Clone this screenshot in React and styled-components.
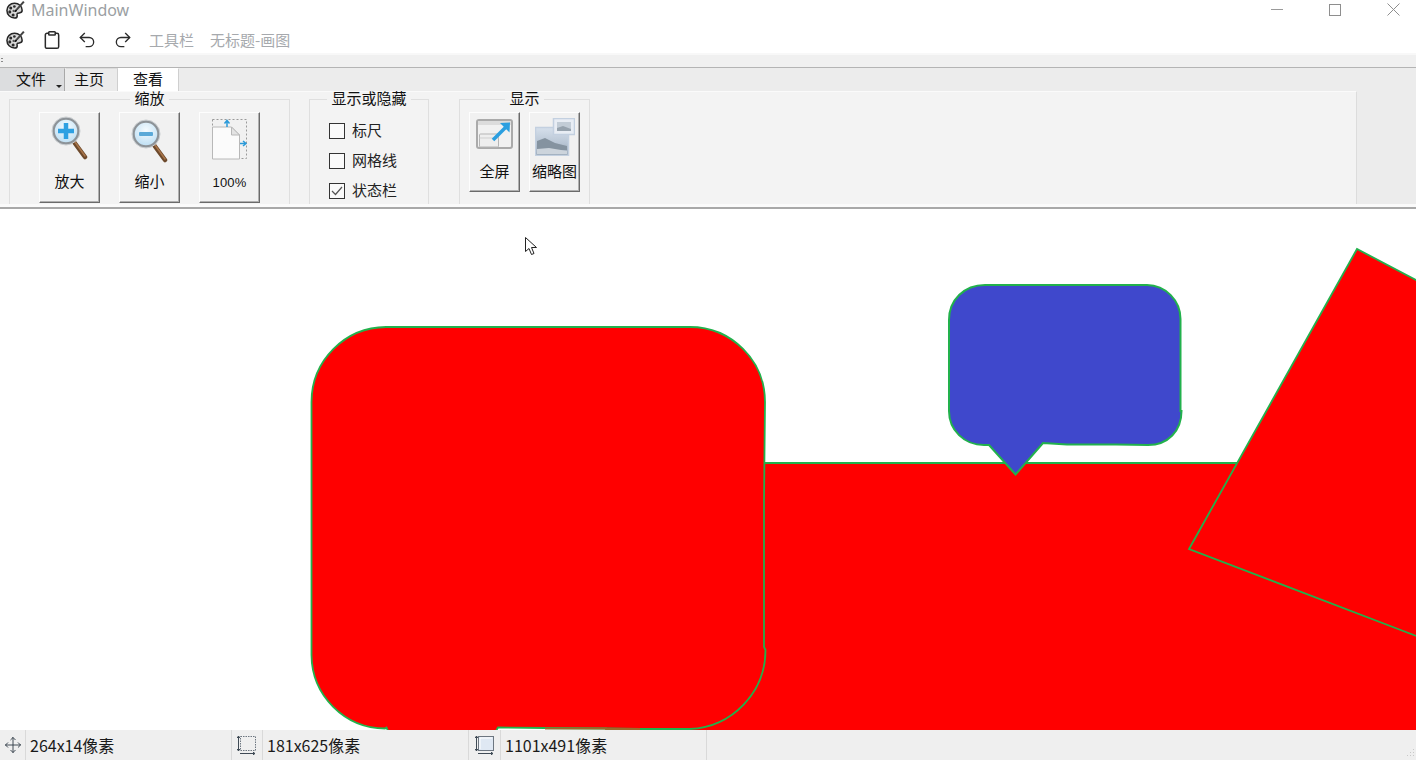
import React from 'react';
import styled, { createGlobalStyle } from 'styled-components';
import { Clipboard, Undo2, Redo2, Move } from 'lucide-react';

const GlobalStyle = createGlobalStyle`
html,body{
  margin:0;
  padding:0;
  overflow:hidden;
  background:#fff;
}
*{box-sizing:border-box;}
body{
  font-family:"Noto Sans CJK SC","Noto Sans",sans-serif;
  font-size:15px;
  color:#111;
}
`;

const Window = styled.div`
width:1416px;
height:760px;
display:flex;
flex-direction:column;
overflow:hidden;
`;

const TitleBar = styled.div`
height:27px;
flex:none;
display:flex;
align-items:center;
padding:0 16px 8px 6px;
background:#fff;
`;
const TitleText = styled.span`
margin-left:6px;
font-family:"Noto Sans","Noto Sans CJK SC",sans-serif;
font-size:16px;
line-height:16px;
color:#9b9fa3;
flex:1;
`;
const WinControls = styled.div`
display:flex;
align-items:center;
gap:46px;
`;

const QuickBar = styled.div`
height:26px;
flex:none;
display:flex;
align-items:center;
padding:0 0 1px 6px;
background:#fff;
`;
const QuickIcon = styled.span`
display:flex;
color:#2b2b2b;
margin-right:${p => p.$gap}px;
`;
const QuickText = styled.span`
font-size:15px;
color:#a6a9ad;
margin-right:${p => p.$gap}px;
`;

const HandleBar = styled.div`
height:15px;
flex:none;
background:#f0f0f0;
border-top:2px solid #f8f8f8;
border-bottom:1px solid #b4b4b4;
padding:3px 0 0 1px;
`;
const Grip = styled.div`
width:2px;
height:6px;
background:repeating-linear-gradient(#8a8a8a 0 1px,transparent 1px 3px);
`;

const TabBar = styled.div`
height:23px;
flex:none;
display:flex;
background:#ececec;
`;
const Tab = styled.div`
width:${p => p.$w}px;
position:relative;
display:flex;
justify-content:center;
align-items:center;
font-size:15px;
line-height:20px;
padding:0 ${p => p.$pr || 0}px 2px 0;
background:${p => p.$active ? '#fff' : p.$file ? '#dcdddf' : '#ebebeb'};
border-top:1px solid ${p => p.$active ? '#fff' : '#dcdcdc'};
border-right:1px solid ${p => p.$file ? '#a8a8a8' : '#cfcfcf'};
margin-right:${p => p.$file ? 1 : 0}px;
`;
const Caret = styled.span`
position:absolute;
left:56px;
top:16px;
width:0;
height:0;
border-left:3.5px solid transparent;
border-right:3.5px solid transparent;
border-top:3.5px solid #222;
`;

const RibbonArea = styled.div`
height:118px;
flex:none;
display:flex;
flex-direction:column;
background:#ececec;
border-bottom:2px solid #a8a8a8;
`;
const Ribbon = styled.div`
width:1357px;
height:113px;
flex:none;
display:flex;
padding-left:9px;
background:#f3f3f3;
border-top:1px solid #fafafa;
border-right:1px solid #dcdcdc;
`;
const RibbonFoot = styled.div`
height:3px;
flex:none;
background:#fafafa;
`;
const Group = styled.fieldset`
width:${p => p.$w}px;
height:113px;
min-width:0;
margin:-1px ${p => p.$gap || 0}px 0 0;
padding:0;
border:1px solid #dfdfdf;
border-bottom:none;
`;
const GroupTitle = styled.legend`
margin:0 auto;
padding:0 4px 2px;
font-size:15px;
line-height:14px;
color:#111;
`;
const GroupBody = styled.div`
display:flex;
padding:5px 0 0 ${p => p.$pad}px;
gap:${p => p.$spacing || 0}px;
`;
const BigButton = styled.div`
width:${p => p.$small ? 51 : 61}px;
height:${p => p.$small ? 80 : 91}px;
display:flex;
flex-direction:column;
align-items:center;
padding:${p => p.$top}px 0 ${p => p.$small ? 10 : 11}px;
background:#f1f1f1;
border-top:1px solid #fdfdfd;
border-left:1px solid #fdfdfd;
border-right:1px solid #6a6a6a;
border-bottom:1px solid #6a6a6a;
box-shadow:inset -1px -1px 0 #b0b0b0;
`;
const ButtonLabel = styled.span`
margin-top:auto;
font-size:15px;
line-height:20px;
white-space:nowrap;
`;
const PercentLabel = styled(ButtonLabel)`
font-family:"Liberation Sans",sans-serif;
font-size:13px;
letter-spacing:.2px;
margin-bottom:-2px;
`;
const CheckList = styled.div`
display:flex;
flex-direction:column;
padding-top:4px;
`;
const CheckRow = styled.label`
height:30px;
display:flex;
align-items:center;
gap:7px;
color:#222;
`;
const CheckText = styled.span`
font-size:15px;
line-height:20px;
padding-bottom:2px;
`;
const CheckBox = styled.span`
width:16px;
height:16px;
display:flex;
align-items:center;
justify-content:center;
background:#fafafa;
border:1px solid #333;
`;

const Canvas = styled.div`
height:521px;
flex:none;
background:#fff;
overflow:hidden;
`;

const StatusBar = styled.div`
height:30px;
flex:none;
position:relative;
display:flex;
background:#efefef;
`;
const StatusIcon = styled.div`
width:${p => p.$w}px;
display:flex;
align-items:center;
justify-content:center;
border-right:1px solid #d9d9d9;
`;
const StatusText = styled.div`
width:${p => p.$w}px;
padding:0 0 1px 4px;
display:flex;
align-items:center;
font-size:16px;
color:#1a1a1a;
border-right:1px solid #d9d9d9;
`;
const SizeGrip = styled.svg`
position:absolute;
right:1px;
bottom:1px;
`;

const PaletteIcon = () => (
  <svg width="19" height="19" viewBox="0 0 20 20">
    <path d="M9 3.500C4.500 3.500 1 6.600 1 11s3.500 8 8 8c2 0 2.800-1 2.800-2.200 0-1.500-1-2 .4-2.800 1.600-.8 4.800.4 4.800-3.200C17 6.500 13.500 3.500 9 3.500z" fill="#d8d8d8" stroke="#262626" strokeWidth="1.600" />
    <circle cx="5" cy="8.500" r="1.600" fill="#2a2a2a" />
    <circle cx="4" cy="12.500" r="1.600" fill="#2a2a2a" />
    <circle cx="7.500" cy="15.800" r="1.600" fill="#2a2a2a" />
    <circle cx="8.800" cy="6.800" r="1.400" fill="#2a2a2a" />
    <circle cx="8" cy="11.500" r="1.200" fill="#555" />
    <path d="M10 11.500l1.200-2.700L18 1l1.600 1.400-6.900 7.500z" fill="#444" />
    <path d="M9 12.500c1 0 2 .2 2.800-1.500l-1.300-1.300C9.500 10.300 9 11 9 12.500z" fill="#111" />
  </svg>
);

const MinIcon = () => (
  <svg width="12" height="12" viewBox="0 0 12 12"><path d="M0 5.500h12" stroke="#9a9a9a" /></svg>
);
const MaxIcon = () => (
  <svg width="12" height="12" viewBox="0 0 12 12"><rect x=".5" y=".5" width="11" height="11" fill="none" stroke="#8e8e8e" /></svg>
);
const CloseIcon = () => (
  <svg width="13" height="13" viewBox="0 0 13 13"><path d="M.5.500l12 12M12.500.500l-12 12" stroke="#8e8e8e" /></svg>
);

const Magnifier = ({ minus }) => (
  <svg width="38" height="44" viewBox="0 0 38 44">
    <defs>
      <radialGradient id={minus ? 'lensB' : 'lensA'} cx=".5" cy=".35" r=".7">
        <stop offset="0" stopColor="#f4fbff" />
        <stop offset="1" stopColor="#b9dcf2" />
      </radialGradient>
    </defs>
    <path d="M23 26l11 15" stroke="#6d4a2c" strokeWidth="4.500" strokeLinecap="round" />
    <path d="M24 26l10 14" stroke="#a9754a" strokeWidth="1.500" strokeLinecap="round" />
    <circle cx="15" cy="15" r="12.500" fill={`url(#${minus ? 'lensB' : 'lensA'})`} stroke="#8d9398" strokeWidth="2.500" />
    <circle cx="15" cy="15" r="14" fill="none" stroke="#c9cdd0" />
    {minus
      ? <rect x="8" y="13" width="14" height="4" rx="1" fill="#5aa9d8" />
      : <path d="M15 7v16M7 15h16" stroke="#2ea0e2" strokeWidth="4.500" />}
  </svg>
);

const ActualSizeIcon = () => (
  <svg width="36" height="41" viewBox="0 0 36 41">
    <rect x=".5" y=".5" width="34" height="39" fill="none" stroke="#9a9a9a" strokeDasharray="2 2" />
    <path d="M.5 8h19l8 8v24H.500z" fill="#fbfbfb" stroke="#b8b8b8" />
    <path d="M19.500 8v8h8z" fill="#e3e3e3" stroke="#b8b8b8" />
    <path d="M15 2v6M12.500 4.500L15 1.500l2.500 3M28 24.500h6M31 22l3 2.500-3 2.500" stroke="#2b9ad9" strokeWidth="1.500" fill="none" />
  </svg>
);

const FullscreenIcon = () => (
  <svg width="37" height="30" viewBox="0 0 37 30">
    <rect x="1" y="1" width="35" height="28" rx="2" fill="#f1f1f1" stroke="#aaa" strokeWidth="2" />
    <path d="M2 2h33v4H2z" fill="#dcdcdc" />
    <rect x="3.500" y="15" width="19" height="13" rx="1" fill="#eee" stroke="#b5b5b5" />
    <path d="M3.500 19h19" stroke="#cfcfcf" />
    <path d="M17 21L30 8" stroke="#2b9fe0" strokeWidth="3.500" />
    <path d="M24 4l10-.5-.5 10z" fill="#2b9fe0" />
  </svg>
);

const ThumbnailIcon = () => (
  <svg width="40" height="38" viewBox="0 0 40 38">
    <defs>
      <linearGradient id="sky" x1="0" y1="0" x2="0" y2="1">
        <stop offset="0" stopColor="#d6e0ec" />
        <stop offset=".55" stopColor="#b9c6d5" />
        <stop offset="1" stopColor="#98a6b5" />
      </linearGradient>
    </defs>
    <rect x=".5" y="9.500" width="33" height="28" fill="url(#sky)" stroke="#c3d0e0" strokeWidth="1.500" />
    <path d="M2 23l8-3 10 5 12 3v4H2z" fill="#8593a0" />
    <path d="M2 31l12-1 18 3v3H2z" fill="#ccd4dc" />
    <rect x="18.500" y=".5" width="21" height="16" fill="#e8edf4" stroke="#c3d0e0" strokeWidth="1.500" />
    <rect x="22" y="4" width="14" height="9" fill="#c2ccd6" />
    <path d="M22 10l6-2 8 3v2H22z" fill="#96a2ad" />
  </svg>
);

const MoveIcon = () => <Move size={18} strokeWidth={1.200} color="#2f3a45" />;

const SelectIcon = () => (
  <svg width="20" height="20" viewBox="0 0 20 20">
    <rect x="3.500" y="1.500" width="15" height="14" fill="none" stroke="#6d7680" strokeDasharray="1.500 1" />
    <path d="M1.500 1v15M.2 3L1.500 1l1.300 2M.2 14l1.300 2 1.300-2M3 18.500h15M16 17.200l2 1.300-2 1.300" stroke="#3f4a55" fill="none" />
  </svg>
);

const CanvasSizeIcon = () => (
  <svg width="20" height="20" viewBox="0 0 20 20">
    <rect x="3.500" y="1.500" width="15" height="14" fill="#dfe8f3" stroke="#6d7680" />
    <path d="M5 14V3h12" stroke="#fff" fill="none" />
    <path d="M1.500 1v15M.2 3L1.500 1l1.300 2M.2 14l1.300 2 1.300-2M3 18.500h15M16 17.200l2 1.300-2 1.300" stroke="#3f4a55" fill="none" />
  </svg>
);

const Drawing = () => (
  <svg width="1416" height="521" viewBox="0 209 1416 521" style={{ display: 'block' }}>
    <rect x="640" y="463" width="800" height="300" fill="#ff0000" />
    <path d="M764 463H1300" fill="none" stroke="#22b14c" strokeWidth="2" />
    <path
      d="M386 327H690A75 75 0 0 1 765 402L764 500V647L765.500 650A79 79 0 0 1 690 729L640 729L606 728.500L545 728L498 727.500L496 731H388L386.500 727.500L385 728.500A74 74 0 0 1 311.500 655V402A75 75 0 0 1 386 327Z"
      fill="#ff0000"
      stroke="#22b14c"
      strokeWidth="1.800"
    />
    <path d="M545 728.500H606V729H640" fill="none" stroke="#9c6a2c" strokeWidth="1.800" />
    <path d="M1357 249L1189 549L1500 668L1500 324Z" fill="#ff0000" stroke="#22b14c" strokeWidth="1.800" />
    <path
      d="M985 285H1147A34 34 0 0 1 1180.500 319V411H1181.500C1181.500 431 1168 445 1148 445L1116 444.500H1067L1043 443L1015.500 474.500L989 445H984C964 445 949 430 949 411V320C949 300 964 285 985 285Z"
      fill="#3f48cc"
      stroke="#22b14c"
      strokeWidth="2"
    />
    <path
      d="M525.500 237.500V251.500L529 248.500L531.500 254.500L534 253.500L531.500 247.500H536.500Z"
      fill="#fff"
      stroke="#222"
      strokeWidth="1"
    />
  </svg>
);

const App = () => {
  return (
    <Window>
      <GlobalStyle />
      <TitleBar>
        <PaletteIcon />
        <TitleText>MainWindow</TitleText>
        <WinControls>
          <MinIcon />
          <MaxIcon />
          <CloseIcon />
        </WinControls>
      </TitleBar>
      <QuickBar>
        <QuickIcon $gap={17}><PaletteIcon /></QuickIcon>
        <QuickIcon $gap={15}><Clipboard size={20} strokeWidth={1.800} /></QuickIcon>
        <QuickIcon $gap={16}><Undo2 size={20} strokeWidth={1.600} /></QuickIcon>
        <QuickIcon $gap={16}><Redo2 size={20} strokeWidth={1.600} /></QuickIcon>
        <QuickText $gap={16}>工具栏</QuickText>
        <QuickText $gap={0}>无标题-画图</QuickText>
      </QuickBar>
      <HandleBar><Grip /></HandleBar>
      <TabBar>
        <Tab $w={65} $file $pr={2}>文件<Caret /></Tab>
        <Tab $w={52} $pr={5}>主页</Tab>
        <Tab $w={61} $active>查看</Tab>
      </TabBar>
      <RibbonArea>
        <Ribbon>
          <Group $w={281} $gap={19}>
            <GroupTitle>缩放</GroupTitle>
            <GroupBody $pad={29} $spacing={19}>
              <BigButton $top={3}>
                <Magnifier />
                <ButtonLabel>放大</ButtonLabel>
              </BigButton>
              <BigButton $top={6}>
                <Magnifier minus />
                <ButtonLabel>缩小</ButtonLabel>
              </BigButton>
              <BigButton $top={6}>
                <ActualSizeIcon />
                <PercentLabel>100%</PercentLabel>
              </BigButton>
            </GroupBody>
          </Group>
          <Group $w={120} $gap={30}>
            <GroupTitle>显示或隐藏</GroupTitle>
            <GroupBody $pad={19}>
              <CheckList>
                <CheckRow><CheckBox /><CheckText>标尺</CheckText></CheckRow>
                <CheckRow><CheckBox /><CheckText>网格线</CheckText></CheckRow>
                <CheckRow>
                  <CheckBox>
                    <svg width="12" height="10" viewBox="0 0 12 10"><path d="M1 5l3.500 3.500L11 1" fill="none" stroke="#555" strokeWidth="1.200" /></svg>
                  </CheckBox>
                  <CheckText>状态栏</CheckText>
                </CheckRow>
              </CheckList>
            </GroupBody>
          </Group>
          <Group $w={131}>
            <GroupTitle>显示</GroupTitle>
            <GroupBody $pad={9} $spacing={9}>
              <BigButton $small $top={6}>
                <FullscreenIcon />
                <ButtonLabel>全屏</ButtonLabel>
              </BigButton>
              <BigButton $small $top={5}>
                <ThumbnailIcon />
                <ButtonLabel>缩略图</ButtonLabel>
              </BigButton>
            </GroupBody>
          </Group>
        </Ribbon>
        <RibbonFoot />
      </RibbonArea>
      <Canvas><Drawing /></Canvas>
      <StatusBar>
        <StatusIcon $w={26}><MoveIcon /></StatusIcon>
        <StatusText $w={206}>264x14像素</StatusText>
        <StatusIcon $w={31}><SelectIcon /></StatusIcon>
        <StatusText $w={206}>181x625像素</StatusText>
        <StatusIcon $w={32}><CanvasSizeIcon /></StatusIcon>
        <StatusText $w={206}>1101x491像素</StatusText>
        <SizeGrip width="11" height="11" viewBox="0 0 11 11">
          <path d="M9 1h1v1H9zM6 4h1v1H6zM9 4h1v1H9zM3 7h1v1H3zM6 7h1v1H6zM9 7h1v1H9z" fill="#c8c8c8" />
        </SizeGrip>
      </StatusBar>
    </Window>
  );
};

export default App;
